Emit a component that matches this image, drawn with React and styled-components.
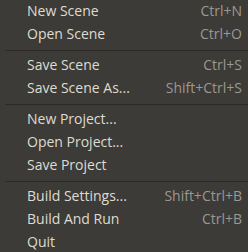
import React from 'react';
import styled, { createGlobalStyle } from 'styled-components';

const GlobalStyle = createGlobalStyle`
  html, body {
    margin: 0;
    padding: 0;
    background: #3c3b37;
  }
`

const Menu = styled.div`
  width: 248px;
  height: 252px;
  overflow: hidden;
  background: #3c3b37;
  font-family: "Open Sans", "DejaVu Sans", sans-serif;
  font-size: 14px;
  display: flex;
  flex-direction: column;
  margin-top: -1px;
`

const Item = styled.div`
  height: 23px;
  line-height: 23px;
  flex: none;
  display: flex;
  justify-content: space-between;
  padding: 0 6px 0 27px;
  color: #dfdbd2;
  white-space: nowrap;
`

const Shortcut = styled.span`
  color: #9b9891;
`

const Separator = styled.div`
  flex: none;
  height: 1px;
  margin: 5px 0 2px 5px;
  background: #2b2a27;
`

const groups = [
  [['New Scene', 'Ctrl+N'], ['Open Scene', 'Ctrl+O']],
  [['Save Scene', 'Ctrl+S'], ['Save Scene As...', 'Shift+Ctrl+S']],
  [['New Project...'], ['Open Project...'], ['Save Project']],
  [['Build Settings...', 'Shift+Ctrl+B'], ['Build And Run', 'Ctrl+B'], ['Quit']],
];

const App = () => {
  return <>
    <GlobalStyle />
    <Menu>
      {groups.map((group, i) => (
        <React.Fragment key={i}>
          {i > 0 && <Separator />}
          {group.map(([label, keys]) => (
            <Item key={label}>
              <span>{label}</span>
              {keys && <Shortcut>{keys}</Shortcut>}
            </Item>
          ))}
        </React.Fragment>
      ))}
    </Menu>
  </>
}

export default App;
